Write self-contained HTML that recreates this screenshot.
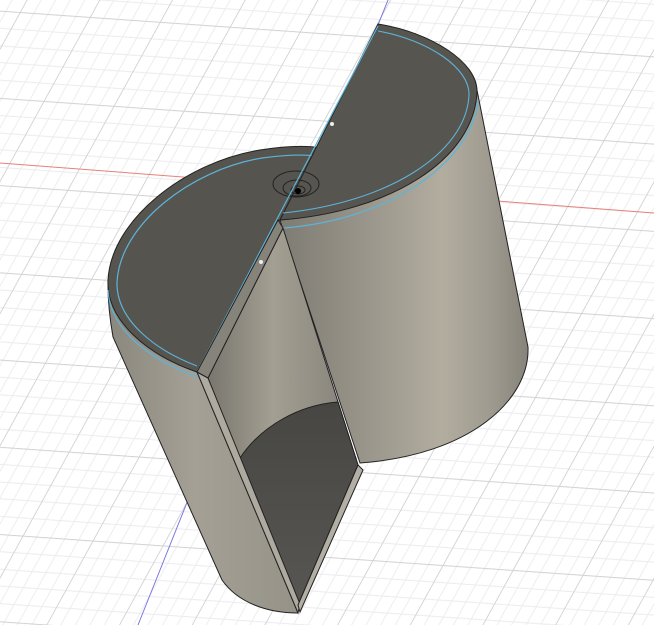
<!DOCTYPE html>
<html><head><meta charset="utf-8"><style>
html,body{margin:0;padding:0;background:#fff;width:654px;height:625px;overflow:hidden}
svg{display:block}
</style></head><body>
<svg width="654" height="625" viewBox="0 0 654 625" xmlns="http://www.w3.org/2000/svg">
<defs>
<pattern id="g" width="70" height="84" patternUnits="userSpaceOnUse" patternTransform="matrix(1,0.07,-0.55,1,20,12)">
<g stroke="#ececef" stroke-width="1" fill="none">
<path d="M14 0V84M28 0V84M42 0V84M56 0V84M0 17H70M0 34H70M0 50H70M0 67H70"/>
</g>
<g stroke="#d2d2d6" stroke-width="1" fill="none"><path d="M0.5 0V84M0 0.5H70"/></g>
</pattern>
<linearGradient id="rb" x1="283" y1="0" x2="528" y2="0" gradientUnits="userSpaceOnUse">
<stop offset="0" stop-color="#7f7c74"/><stop offset="0.35" stop-color="#9a968b"/>
<stop offset="0.65" stop-color="#b2ad9f"/><stop offset="0.85" stop-color="#9e9a8f"/><stop offset="1" stop-color="#86837a"/>
</linearGradient>
<linearGradient id="lb" x1="108" y1="0" x2="300" y2="0" gradientUnits="userSpaceOnUse">
<stop offset="0" stop-color="#8a877e"/><stop offset="0.45" stop-color="#a4a095"/><stop offset="1" stop-color="#959288"/>
</linearGradient>
<linearGradient id="cv" x1="210" y1="0" x2="350" y2="0" gradientUnits="userSpaceOnUse">
<stop offset="0" stop-color="#7a776f"/><stop offset="0.45" stop-color="#a39f92"/><stop offset="1" stop-color="#85827a"/>
</linearGradient>
<linearGradient id="fl" x1="0" y1="400" x2="0" y2="605" gradientUnits="userSpaceOnUse">
<stop offset="0" stop-color="#474643"/><stop offset="1" stop-color="#575652"/>
</linearGradient>
</defs>
<rect width="654" height="625" fill="#fff"/>
<rect width="654" height="625" fill="url(#g)"/>
<line x1="0" y1="163" x2="654" y2="213" stroke="#e8807a" stroke-width="1"/>
<line x1="388" y1="0" x2="138" y2="625" stroke="#7b7be0" stroke-width="1"/>

<path d="M108,285 C108,305 110,320 113,337 L222,580 C238,603 268,613 298,613 L197,372 C150,355 112,325 108,285 Z" fill="url(#lb)" stroke="#222" stroke-width="1"/>
<path d="M197,372 C150,356 106,322 108,280 C111,220 185,162 260,150 C285,146 305,145 322,148 L280,220 Z" fill="#55544f" stroke="#222" stroke-width="1"/>
<path d="M197,366 C155,350 116,320 117,282 C120,225 190,170 262,158 C285,155 302,154 316,156" fill="none" stroke="#5fb3d8" stroke-width="1.2"/>
<path d="M198,377 C150,360 110,330 108,290" fill="none" stroke="#5fb3d8" stroke-width="1.2"/>

<path d="M280,220 C380,212 470,150 477,90 L528,347 C530,400 470,455 360,463 L283,230 Z" fill="url(#rb)" stroke="#222" stroke-width="1"/>
<path d="M378,24 C430,32 478,62 477,92 C474,160 390,212 280,220 Z" fill="#56554f" stroke="#222" stroke-width="1"/>
<path d="M378,31 C428,40 470,68 469,95 C466,155 385,203 283,213" fill="none" stroke="#5fb3d8" stroke-width="1.1"/>
<path d="M283,228 C390,220 472,162 478,100" fill="none" stroke="#5fb3d8" stroke-width="1.3"/>

<ellipse cx="296" cy="184" rx="23" ry="13" fill="none" stroke="#222" stroke-width="1"/>
<ellipse cx="297" cy="188" rx="14" ry="8" fill="none" stroke="#222" stroke-width="1"/>
<ellipse cx="298" cy="190" rx="7" ry="4" fill="none" stroke="#222" stroke-width="1"/>
<circle cx="298" cy="191" r="3" fill="#000"/>
<line x1="378" y1="26" x2="197" y2="372" stroke="#5fb3d8" stroke-width="1.2"/>
<circle cx="332" cy="124" r="2" fill="#eee"/>

<path d="M283,228 L358,465 L298,605 L208,378 Z" fill="url(#cv)" stroke="#222" stroke-width="1"/>
<path d="M240,458 C262,425 300,405 338,402 L358,465 L298,605 Z" fill="url(#fl)" stroke="#222" stroke-width="1"/>
<path d="M197,372 L208,378 L300,604 L298,613 Z" fill="#aeaa9f" stroke="#222" stroke-width="1"/>
<path d="M278,220 L283,228 L208,378 L197,372 Z" fill="#86837b" stroke="#222" stroke-width="1"/>
<path d="M358,465 L363,470 L300,612 L298,605 Z" fill="#b3afa4" stroke="#222" stroke-width="1"/>
<circle cx="261" cy="262" r="2" fill="#eee"/>
</svg>
</body></html>
